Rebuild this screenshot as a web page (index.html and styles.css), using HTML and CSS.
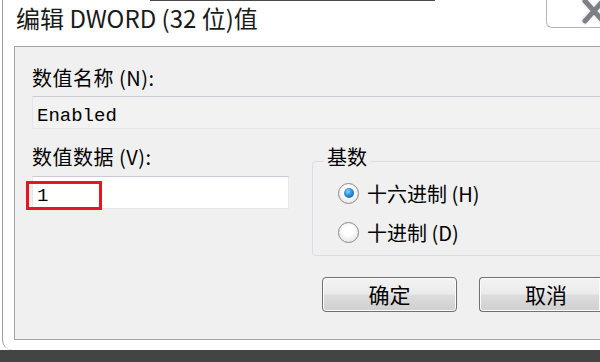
FILE: index.html
```html
<!DOCTYPE html>
<html lang="zh-CN">
<head>
    <meta charset="UTF-8">
    <meta name="viewport" content="width=device-width, initial-scale=1.0">
    <title>编辑 DWORD (32 位)值</title>
    <link rel="stylesheet" href="styles.css">
</head>
<body>
    <div class="window">
        <div class="top-edge"></div>
        <div class="titlebar">
            <span class="title">编辑 DWORD (32 位)值</span>
            <div class="close-btn">
                <svg width="20" height="26" viewBox="0 0 20 26">
                    <path d="M5,1 L23,21 M23,1 L5,21" stroke="#f4f4f4" stroke-width="9" stroke-linecap="round"/>
                    <path d="M5,1 L23,21 M23,1 L5,21" stroke="#7c7f86" stroke-width="5" stroke-linecap="round"/>
                </svg>
            </div>
        </div>
        <div class="client">
            <div class="field-label">数值名称 (N):</div>
            <div class="textbox readonly">Enabled</div>
            <div class="data-row">
                <div class="data-col">
                    <div class="field-label">数值数据 (V):</div>
                    <div class="textbox value">
                        <span class="highlight"></span>1
                    </div>
                </div>
                <fieldset class="base-group">
                    <legend>基数</legend>
                    <div class="radio-row"><span class="radio checked"></span>十六进制 (H)</div>
                    <div class="radio-row"><span class="radio"></span>十进制 (D)</div>
                </fieldset>
            </div>
            <div class="buttons">
                <button class="btn">确定</button>
                <button class="btn cut">取消</button>
            </div>
        </div>
    </div>
    <div class="taskbar"></div>
</body>
</html>
```

FILE: styles.css
```css
* {
    box-sizing: border-box;
}

body {
    margin: 0;
    width: 600px;
    height: 362px;
    overflow: hidden;
    background: #fff;
    font-family: "Noto Sans CJK SC", sans-serif;
    color: #000;
}

.window {
    position: relative;
    width: 598px;
    height: 350px;
    margin-left: 2px;
    padding-left: 11px;
    background: #fff;
    border-left: 1px solid #9c9c9c;
    border-bottom-left-radius: 10px;
}

.top-edge {
    height: 1px;
    width: 285px;
    margin-left: 136px;
    background: #4a4a4a;
}

.titlebar {
    height: 45px;
    padding-top: 5px;
    padding-left: 2px;
}

.title {
    font-size: 24px;
    line-height: 23px;
    color: #1a1a1a;
}

/* window close button, cut by the right edge */
.close-btn {
    position: absolute;
    top: -6px;
    right: 0;
    width: 54px;
    height: 34px;
    background: #fff;
    border: 1px solid #b4b4b4;
    border-right: none;
    border-radius: 6px 0 0 6px;
    padding: 5px 0 0 33px;
    overflow: hidden;
}

.close-btn svg {
    display: block;
}

.client {
    height: 294px;
    background: #f0f0f0;
    border: 1px solid #a3a3a3;
    border-right: none;
    padding-left: 17px;
}

.field-label {
    font-size: 20px;
    line-height: 20px;
    margin-top: 21px;
    letter-spacing: 0.5px;
}

.textbox {
    height: 33px;
    margin-top: 8px;
    padding: 8px 0 0 4px;
    border: 1px solid #e3e6ea;
    border-top-color: #c9ccd2;
    font-family: "Liberation Mono", monospace;
    font-size: 19px;
    line-height: 23px;
}

.textbox.readonly {
    background: #f2f2f2;
    border-right: none;
}

.data-row {
    display: flex;
    gap: 23px;
}

.data-col {
    width: 257px;
    padding-top: 18px;
}

.data-col .field-label {
    margin-top: 0;
}

.textbox.value {
    position: relative;
    margin-top: 9px;
    background: #fff;
}

.highlight {
    position: absolute;
    left: -7px;
    top: 4px;
    width: 76px;
    height: 29px;
    border: 3px solid #e5161d;
}

.base-group {
    flex: 1;
    margin: 18px 0 0;
    padding: 0 0 9px;
    border: 1px solid #d8dfe4;
    border-right: none;
    border-radius: 4px 0 0 4px;
}

.base-group legend {
    margin-left: 11px;
    padding: 0 3px 8px;
    font-size: 20px;
    line-height: 20px;
}

.radio-row {
    display: flex;
    align-items: center;
    gap: 8px;
    height: 28px;
    margin: 4px 0 0 25px;
    font-size: 20px;
}

.radio-row + .radio-row {
    margin-top: 11px;
}

.radio {
    width: 21px;
    height: 21px;
    border-radius: 50%;
    border: 1px solid #8a8a8a;
    background: radial-gradient(circle at 50% 40%, #ffffff 30%, #dcdcdc 100%);
    display: flex;
    align-items: center;
    justify-content: center;
}

.radio.checked::after {
    content: '';
    width: 10px;
    height: 10px;
    border-radius: 50%;
    background: radial-gradient(circle at 40% 35%, #8fd4ff 0%, #2a8fd8 45%, #0b4f91 100%);
}

.buttons {
    display: flex;
    gap: 22px;
    margin: 21px 0 0 290px;
}

.btn {
    width: 135px;
    height: 35px;
    padding: 0;
    border: 1px solid #707070;
    border-radius: 4px;
    background: linear-gradient(#f3f3f3 0%, #ebebeb 48%, #dddddd 52%, #cfcfcf 100%);
    box-shadow: inset 0 0 0 1px #fbfbfb;
    font-family: "Noto Sans CJK SC", sans-serif;
    font-size: 21px;
    line-height: 33px;
    color: #000;
}

/* second button runs off the right edge: keep its text where it would sit */
.btn.cut {
    width: 121px;
    border-right: none;
    border-radius: 4px 0 0 4px;
    padding-left: 12px;
}

.taskbar {
    height: 12px;
    background: #444;
}
```
